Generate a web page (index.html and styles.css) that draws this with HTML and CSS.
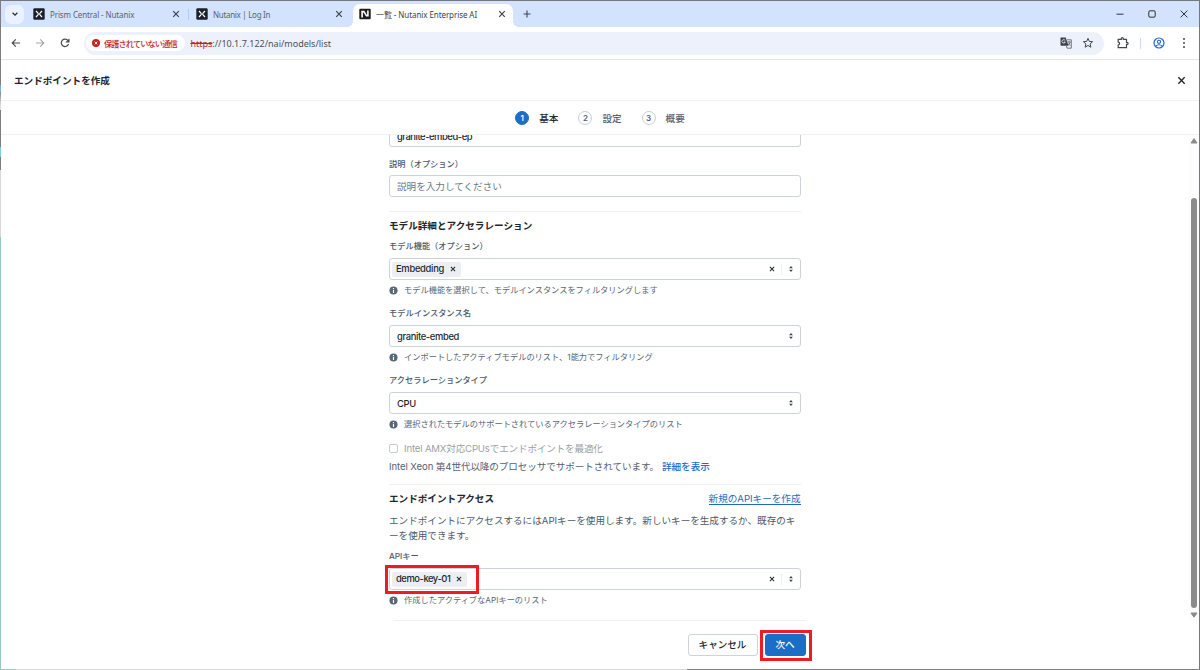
FILE: index.html
```html
<!DOCTYPE html>
<html lang="ja">
<head>
    <meta charset="UTF-8">
    <meta name="viewport" content="width=device-width, initial-scale=1.0">
    <title>一覧 - Nutanix Enterprise AI</title>
    <link rel="stylesheet" href="styles.css">
</head>
<body>
    <svg width="0" height="0" class="defs">
        <symbol id="x" viewBox="0 0 10 10"><path d="M1.5 1.5l7 7M8.5 1.5l-7 7" fill="none" stroke="currentColor" stroke-width="var(--sw, 1.5)"/></symbol>
        <symbol id="info" viewBox="0 0 10 10"><circle cx="5" cy="5" r="4.5" fill="#566778"/><path d="M5 2.1v1.3M5 4.3v3.5" stroke="#fff" stroke-width="1.3"/></symbol>
        <symbol id="updown" viewBox="0 0 6 8"><path d="M3 .9L4.9 3.2H1.1zM3 7.1L4.9 4.8H1.1z" fill="#3a4450"/></symbol>
        <symbol id="nx" viewBox="0 0 12 12"><rect x=".3" y=".3" width="11.4" height="11.4" rx="1.3" fill="#1b2028"/><path d="M3 3l2 2.1M9 3L7 5.1M3 9l2-2.1M9 9L7 6.9M4.7 6h2.6" fill="none" stroke="#fff" stroke-width="1.3"/></symbol>
    </svg>
    <div class="window">
        <div class="tabs">
            <div class="tab-search"><svg width="8" height="8" viewBox="0 0 8 8"><path d="M1.6 2.8L4 5.2l2.4-2.4" fill="none" stroke="#2a2d33" stroke-width="1.3"/></svg></div>
            <div class="tab tab-first">
                <svg class="fav"><use href="#nx"/></svg>
                <span class="t1">Prism Central - Nutanix</span>
                <svg class="close"><use href="#x"/></svg>
            </div>
            <i class="tab-sep"></i>
            <div class="tab tab-second">
                <svg class="fav"><use href="#nx"/></svg>
                <span class="t2">Nutanix | Log In</span>
                <svg class="close"><use href="#x"/></svg>
            </div>
            <div class="tab active">
                <svg class="fav" viewBox="0 0 12 12"><rect x=".3" y=".8" width="11.4" height="10.4" rx="1" fill="#1d1d1d"/><path d="M3.1 9.4V3.6h1.8l2.6 4.2h1.4V2.6" fill="none" stroke="#fff" stroke-width="1.6"/></svg>
                <span class="t3">一覧 - Nutanix Enterprise AI</span>
                <svg class="close"><use href="#x"/></svg>
            </div>
            <svg class="new-tab" viewBox="0 0 8 8"><path d="M4 .5v7M.5 4h7" stroke="#41464d" stroke-width="1.1"/></svg>
            <div class="controls">
                <svg width="8" height="8" viewBox="0 0 8 8"><path d="M.5 4.2h7" stroke="#333" stroke-width="1"/></svg>
                <svg width="8" height="8" viewBox="0 0 8 8"><rect x=".8" y=".8" width="6.4" height="6.4" rx="1.2" fill="none" stroke="#333"/></svg>
                <svg width="8" height="8" viewBox="0 0 8 8"><path d="M.6.6l6.8 6.8M7.4.6L.6 7.4" stroke="#333" stroke-width="1"/></svg>
            </div>
        </div>
        <div class="toolbar">
            <svg class="nav" viewBox="0 0 10 10"><path d="M9 5H1.3M4.8 1.3L1.2 5l3.6 3.7" fill="none" stroke="#44474c" stroke-width="1.1"/></svg>
            <svg class="nav" viewBox="0 0 10 10"><path d="M1 5h7.7M5.2 1.3L8.8 5 5.2 8.7" fill="none" stroke="#a5a7aa" stroke-width="1.1"/></svg>
            <svg class="nav" viewBox="0 0 10 10"><path d="M8.5 6A3.7 3.7 0 1 1 8 2.7L8.8 3.6M8.9.7v3.1H5.8" fill="none" stroke="#44474c" stroke-width="1.2"/></svg>
            <div class="omnibox">
                <div class="warn">
                    <svg width="8" height="8" viewBox="0 0 8 8"><circle cx="4" cy="4" r="4" fill="#c5221f"/><path d="M2.6 2.6l2.8 2.8M5.4 2.6L2.6 5.4" stroke="#fff" stroke-width=".9"/></svg>
                    <span>保護されていない通信</span>
                </div>
                <div class="url"><s>https</s><span>://10.1.7.122/nai/models/list</span></div>
                <svg class="translate" viewBox="0 0 12 12"><path d="M.5.5h5.2l2.8 8.3H1.2Q.5 8.8.5 8z" fill="#3f434a"/><path d="M5.2 3.5A1.7 1.7 0 1 0 5.3 5H3.9" fill="none" stroke="#fff" stroke-width=".8"/><path d="M7 2.8h4.3v8.4H7.2L6.3 9M7.3 5h3.4M9 4.2V5M10.2 5Q9.5 7.5 7.7 8.5M8 6.3l2.4 2.4" fill="none" stroke="#555a60" stroke-width=".8"/></svg>
                <svg class="star" viewBox="0 0 12 12"><path d="M6 1.4l1.3 3 3.3.3L8.1 6.9l.8 3.3L6 8.5l-2.9 1.7.8-3.3-2.5-2.2 3.3-.3z" fill="none" stroke="#44474c" stroke-width="1"/></svg>
            </div>
            <svg class="ext" viewBox="0 0 12 12"><path d="M1.2 2.4h3.1V1.7a1 1 0 0 1 2 0v.7h3.2v3h.6a1 1 0 0 1 0 2h-.6v3.2H1.2V8a1.4 1.4 0 0 0 0-2.8z" fill="none" stroke="#44474c" stroke-width="1.2"/></svg>
            <i class="bar-sep"></i>
            <svg class="user" viewBox="0 0 12 12"><circle cx="6" cy="6" r="5" fill="none" stroke="#1f65d0" stroke-width="1.2"/><circle cx="6" cy="4.8" r="1.6" fill="none" stroke="#1f65d0" stroke-width="1.1"/><path d="M2.7 9.2Q6 6.4 9.3 9.2" fill="none" stroke="#1f65d0" stroke-width="1.1"/></svg>
            <svg class="menu" viewBox="0 0 4 12"><g fill="#44474c"><circle cx="2" cy="2" r="1"/><circle cx="2" cy="6" r="1"/><circle cx="2" cy="10" r="1"/></g></svg>
        </div>
        <div class="header">
            <h1>エンドポイントを作成</h1>
            <svg class="dialog-close"><use href="#x"/></svg>
        </div>
        <div class="steps">
            <div class="step current"><b>1</b><span>基本</span></div>
            <div class="step"><b>2</b><span>設定</span></div>
            <div class="step"><b>3</b><span>概要</span></div>
        </div>
        <div class="content">
            <div class="form">
                <div class="input name-input"><span class="latin tight">granite-embed-ep</span></div>
                <label class="desc-label">説明（オプション）</label>
                <div class="input placeholder">説明を入力してください</div>
                <hr class="hr-model">
                <h2>モデル詳細とアクセラレーション</h2>
                <label>モデル機能（オプション）</label>
                <div class="input multi">
                    <div class="chip"><span>Embedding</span><svg><use href="#x"/></svg></div>
                    <svg class="clear"><use href="#x"/></svg><i></i><svg class="arrows"><use href="#updown"/></svg>
                </div>
                <p class="help"><svg><use href="#info"/></svg>モデル機能を選択して、モデルインスタンスをフィルタリングします</p>
                <label>モデルインスタンス名</label>
                <div class="input"><span class="latin">granite-embed</span><svg class="arrows"><use href="#updown"/></svg></div>
                <p class="help"><svg><use href="#info"/></svg>インポートしたアクティブモデルのリスト、1能力でフィルタリング</p>
                <label>アクセラレーションタイプ</label>
                <div class="input"><span class="latin">CPU</span><svg class="arrows"><use href="#updown"/></svg></div>
                <p class="help"><svg><use href="#info"/></svg>選択されたモデルのサポートされているアクセラレーションタイプのリスト</p>
                <div class="check"><i></i><span>Intel AMX対応CPUsでエンドポイントを最適化</span></div>
                <div class="note"><span>Intel Xeon 第4世代以降のプロセッサでサポートされています。</span><a>詳細を表示</a></div>
                <hr class="hr-access">
                <div class="access-head"><h2>エンドポイントアクセス</h2><a>新規のAPIキーを作成</a></div>
                <p class="access-text">エンドポイントにアクセスするにはAPIキーを使用します。新しいキーを生成するか、既存のキ<br>ーを使用できます。</p>
                <label>APIキー</label>
                <div class="input multi">
                    <div class="chip"><span class="tight">demo-key-01</span><svg><use href="#x"/></svg></div>
                    <svg class="clear"><use href="#x"/></svg><i></i><svg class="arrows"><use href="#updown"/></svg>
                    <div class="mark mark-key"></div>
                </div>
                <p class="help"><svg><use href="#info"/></svg>作成したアクティブなAPIキーのリスト</p>
            </div>
            <div class="scrollbar">
                <svg width="8" height="6" viewBox="0 0 8 6"><path d="M4 .6L7 5H1z" fill="#8b8b8b" stroke="#8b8b8b" stroke-linejoin="round"/></svg>
                <div class="thumb"></div>
                <svg width="8" height="6" viewBox="0 0 8 6"><path d="M4 5.2L7 1H1z" fill="#8b8b8b" stroke="#8b8b8b" stroke-linejoin="round"/></svg>
            </div>
        </div>
        <div class="footer">
            <button class="cancel">キャンセル</button>
            <button class="next">次へ<div class="mark mark-next"></div></button>
        </div>
    </div>
</body>
</html>
```

FILE: styles.css
```css
* {
    box-sizing: border-box;
}

body {
    margin: 0;
    width: 1200px;
    height: 670px;
    overflow: hidden;
    font-family: Inter, "Noto Sans CJK JP", sans-serif;
    font-size: 9.58px;
    color: #22272e;
    background: linear-gradient(90deg, #9fcbbf 16px, #d8d8d8 16px, #d8d8d8 687px, #808080 687px) bottom / 100% 1px no-repeat,
        linear-gradient(#7d7d82 85px, #6ab0d8 85px, #79b5d8 92px, #85858a 92px, #dcdcdc 105px, #dcdcdc 110px, #7c7c7c 110px, #7c7c7c 147px, #7fc8d8 147px, #7fc8d8 157px, #7c7c7c 157px, #7c7c7c 170px, #d8d8d8 170px, #d8d8d8 237px, #93cbb9 237px) left / 1px 100% no-repeat,
        #75777c;
}

.defs {
    position: absolute;
}

svg {
    flex: none;
    display: block;
}

h1, h2, p, hr {
    margin: 0;
}

.window {
    display: flex;
    flex-direction: column;
    width: 1198px;
    height: 668px;
    margin: 1px;
    background: #fff;
}

/* browser tabs */
.tabs {
    display: flex;
    align-items: center;
    height: 26px;
    background: #d3e3fd;
    font-family: "Noto Sans", "Noto Sans CJK JP", sans-serif;
    font-size: 8px;
    color: #5a6270;
    white-space: nowrap;
}

.t1 {
    letter-spacing: -0.12px;
}

.t2 {
    letter-spacing: -0.3px;
}

.t3 {
    letter-spacing: -0.08px;
}

.tab-search {
    display: grid;
    place-items: center;
    width: 19px;
    height: 19px;
    margin-left: 4px;
    border-radius: 6px;
    background: #ebf2fe;
}

.tab {
    display: flex;
    align-items: center;
    height: 23px;
}

.tab-first {
    width: 147px;
    margin-left: 9px;
}

.tab-sep {
    width: 1px;
    height: 11px;
    margin-left: 8px;
    background: #aecbfa;
}

.tab-second {
    width: 147px;
    margin-left: 7px;
}

.fav {
    width: 12px;
    height: 12px;
    margin-right: 5px;
}

.tab .close {
    width: 8px;
    height: 8px;
    margin-left: auto;
    color: #3d434c;
}

.tab.active {
    position: relative;
    width: 160px;
    align-self: flex-end;
    padding: 0 7px 3px 6px;
    margin-left: 10px;
    border-radius: 7px 7px 0 0;
    background: #fff;
    color: #3a3f47;
}

.tab.active::before, .tab.active::after {
    content: "";
    position: absolute;
    bottom: 0;
    width: 6px;
    height: 6px;
}

.tab.active::before {
    left: -6px;
    background: radial-gradient(circle at 0 0, transparent 6px, #fff 6px);
}

.tab.active::after {
    right: -6px;
    background: radial-gradient(circle at 100% 0, transparent 6px, #fff 6px);
}

.new-tab {
    width: 8px;
    height: 8px;
    margin-left: 10px;
}

.controls {
    display: flex;
    gap: 24px;
    margin-left: auto;
    margin-right: 11px;
}

/* address bar */
.toolbar {
    display: flex;
    align-items: center;
    height: 33px;
    padding-left: 10px;
    border-bottom: 1px solid #e3e5e9;
}

.nav {
    width: 10px;
    height: 10px;
    margin-right: 14.3px;
}

.omnibox {
    display: flex;
    align-items: center;
    width: 1020px;
    height: 23px;
    padding-left: 2px;
    border-radius: 12px;
    background: #ecf1fb;
    font-family: "Noto Sans", "Noto Sans CJK JP", sans-serif;
    font-size: 9px;
    color: #4c5057;
}

.warn {
    display: flex;
    align-items: center;
    gap: 4px;
    width: 99px;
    height: 16px;
    padding-left: 6px;
    border-radius: 8px;
    background: #fff;
    color: #c5221f;
    font-size: 8.2px;
    font-weight: 500;
    white-space: nowrap;
}

.warn span {
    letter-spacing: -0.87px;
}

.url {
    margin-left: 5.5px;
}

.url s {
    color: #c5221f;
}

.translate {
    width: 12px;
    height: 12px;
    margin-left: auto;
}

.star {
    width: 12px;
    height: 12px;
    margin: 0 10px 0 10px;
}

.ext {
    width: 12px;
    height: 12px;
    margin-left: 13px;
}

.bar-sep {
    width: 1px;
    height: 11px;
    margin-left: 11px;
    background: #c9dcfb;
}

.user {
    width: 12px;
    height: 12px;
    margin-left: 12px;
}

.menu {
    width: 4px;
    height: 12px;
    margin-left: 17px;
}

/* dialog header */
.header {
    display: flex;
    align-items: center;
    justify-content: space-between;
    height: 41px;
    padding: 0 13px;
    border-bottom: 1px solid #f1f2f4;
}

h1, h2 {
    font-size: 9.6px;
    font-weight: 700;
    line-height: 15px;
}

.dialog-close {
    --sw: 1.5;
    width: 9px;
    height: 9px;
}

.steps {
    display: flex;
    justify-content: center;
    align-items: center;
    gap: 20px;
    height: 34px;
    border-bottom: 1px solid #eff0f2;
}

.step {
    display: flex;
    align-items: center;
    gap: 10px;
    font-weight: 500;
    color: #566070;
}

.step b {
    display: grid;
    place-items: center;
    width: 14px;
    height: 14px;
    border: 1px solid #c8cdd5;
    border-radius: 50%;
    font-size: 8px;
    font-weight: 600;
    line-height: 1;
}

.step.current {
    color: #22272e;
}

.step.current b {
    border-color: #1b6dc6;
    background: #1b6dc6;
    color: #fff;
}

/* form */
.content {
    display: flex;
    justify-content: space-between;
    height: 485px;
    overflow: hidden;
}

.form {
    width: 411.5px;
    margin-left: 388px;
}

.input {
    display: flex;
    align-items: center;
    height: 22px;
    padding: 1px 6px 0 7px;
    border: 1px solid #cdd2db;
    border-radius: 3px;
    line-height: 14px;
}

.input > .arrows {
    margin-bottom: 1px;
}

.latin {
    font-size: 9.4px;
    font-weight: 500;
    letter-spacing: -0.35px;
}

.latin.tight, .chip .tight {
    letter-spacing: -0.45px;
}

.name-input {
    margin-top: -10px;
}

.placeholder {
    padding-top: 2px;
    color: #6c7787;
}

label {
    display: block;
    height: 13px;
    margin: 7px 0 5px;
    font-size: 8.22px;
    font-weight: 500;
    line-height: 13px;
    color: #4d5866;
}

.desc-label {
    margin: 11px 0 4px;
}

hr {
    height: 1px;
    border: 0;
    background: #eff0f3;
}

.hr-model {
    margin: 14px 0 6px;
}

.hr-access {
    margin: 8px 0 6px;
}

.arrows {
    width: 6px;
    height: 8px;
    margin-left: auto;
}

.multi {
    position: relative;
    padding-top: 0;
    padding-left: 2px;
}

.multi i {
    width: 1px;
    height: 11px;
    margin-left: 6px;
    background: #eceef1;
}

.multi > .arrows {
    margin: 0 0 0 6px;
}

.chip {
    display: flex;
    align-items: center;
    gap: 6px;
    height: 15px;
    padding: 0 5px 0 4px;
    border-radius: 2px;
    background: #eceff2;
    font-size: 9.4px;
    font-weight: 500;
    letter-spacing: -0.3px;
}

.chip svg, .clear {
    --sw: 1.7;
    width: 6px;
    height: 6px;
}

.clear {
    margin-left: auto;
}

.help {
    display: flex;
    align-items: center;
    height: 20px;
    padding-bottom: 2px;
    font-size: 8.22px;
    color: #5a6675;
    white-space: nowrap;
}

.help svg {
    width: 9px;
    height: 9px;
    margin: 2px 6px 0 0;
}

.check {
    display: flex;
    align-items: center;
    height: 18px;
    padding-bottom: 2px;
    margin-top: 6px;
    letter-spacing: -0.16px;
    color: #9a9fa8;
}

.check i {
    width: 9px;
    height: 9px;
    margin: 1px 6px 0 0;
    border: 1px solid #c6cbd3;
    border-radius: 2px;
}

.note {
    display: flex;
    align-items: center;
    gap: 3px;
    height: 18px;
    padding-bottom: 2px;
    color: #566070;
    white-space: nowrap;
}

.note span {
    letter-spacing: -0.09px;
}

a {
    color: #1b6dc6;
    font-weight: 500;
}

.access-head {
    display: flex;
    justify-content: space-between;
    height: 15px;
    line-height: 15px;
}

.access-head a {
    height: 14px;
    border-bottom: 1px solid #1b6dc6;
    font-weight: 400;
}

.access-text {
    margin-top: 7px;
    line-height: 15px;
    color: #4d5866;
    white-space: nowrap;
}

.scrollbar {
    display: flex;
    flex-direction: column;
    align-items: center;
    justify-content: space-between;
    width: 10px;
    padding: 3px 0 2px;
    background: #fcfcfc;
}

.thumb {
    width: 6px;
    height: 410px;
    margin-top: 50px;
    border-radius: 3px;
    background: #8b8b8b;
}

.footer {
    display: flex;
    justify-content: flex-end;
    gap: 7px;
    width: 412px;
    margin-left: 393px;
    padding-top: 13px;
    border-top: 1px solid #eff0f3;
}

button {
    height: 22px;
    padding: 0 1px 2px 0;
    border: 1px solid #cdd2db;
    border-radius: 3px;
    background: #fff;
    font: 500 9.58px Inter, "Noto Sans CJK JP", sans-serif;
    color: #22272e;
}

.cancel {
    width: 70px;
}

.next {
    position: relative;
    width: 41px;
    border-color: #1b6dc6;
    background: #1b6dc6;
    color: #fff;
}

/* red highlight frames */
.mark {
    position: absolute;
    border: 3px solid #ed1c24;
}

.mark-key {
    left: -5px;
    top: -4px;
    width: 94px;
    height: 29px;
}

.mark-next {
    left: -6px;
    top: -5px;
    width: 52px;
    height: 31px;
}
```
